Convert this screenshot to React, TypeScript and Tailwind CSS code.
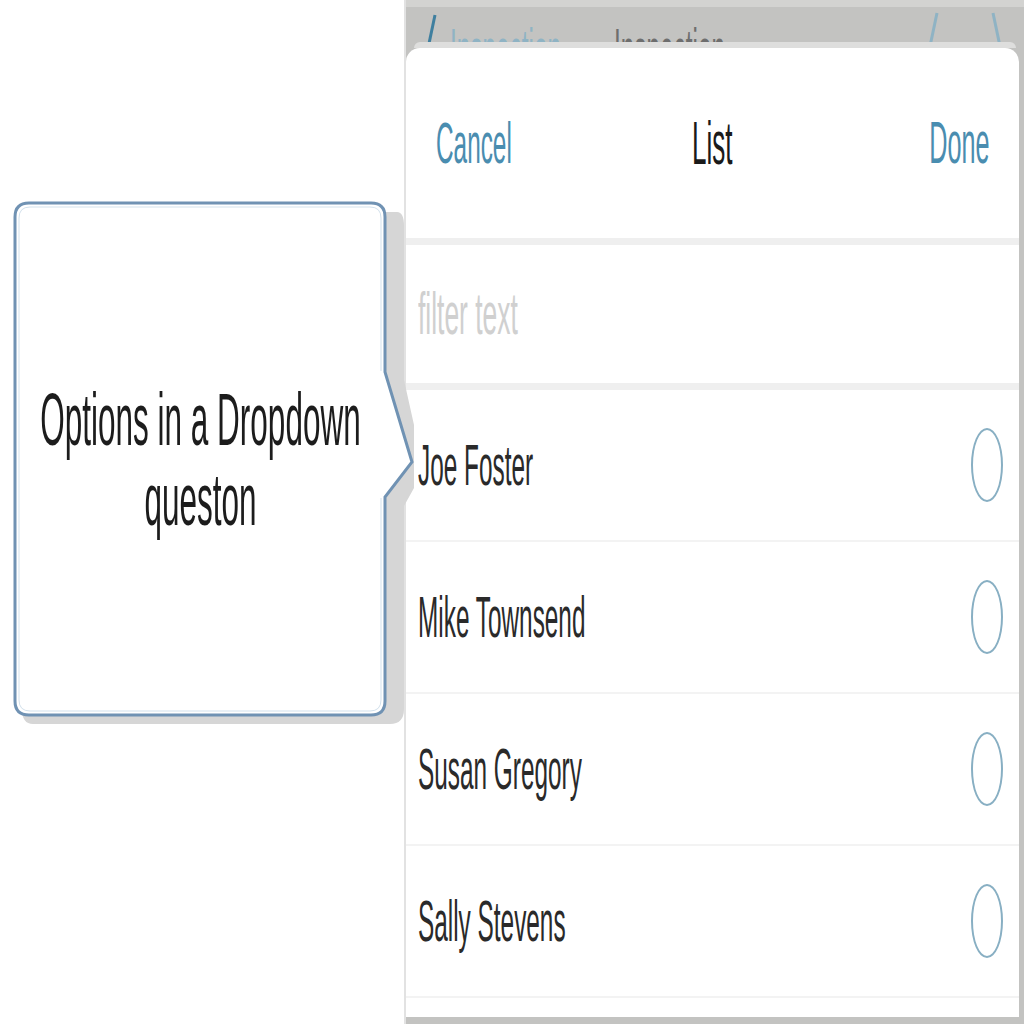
import React from "react";

const font = { fontFamily: '"Liberation Sans", Arial, sans-serif' };

function SqL({ children, className = "" }: { children: React.ReactNode; className?: string }) {
  return <span className={"inline-block whitespace-nowrap origin-left scale-x-[0.42] " + className}>{children}</span>;
}

const people = ["Joe Foster", "Mike Townsend", "Susan Gregory", "Sally Stevens"];

export default function App() {
  return (
    <div className="w-[1024px] h-[1024px] bg-white flex overflow-hidden" style={font}>
      {/* Left: callout */}
      <div className="w-[404px] shrink-0">
        <div className="mt-[200px] ml-[12px] relative w-[402px] h-[545px]">
          <svg className="absolute inset-0" width="402" height="545" viewBox="0 0 402 545">
            <path
              d="M 21 12 H 385 Q 392 12 392 26 V 180 L 412 270 L 392 306 V 509 Q 392 524 378 524 H 21 Q 10 524 10 509 V 26 Q 10 12 21 12 Z"
              fill="#d6d6d6"
            />
            <path
              d="M 17 3 H 359 Q 373 3 373 17 V 172 L 400 262 L 373 297 V 501 Q 373 515 359 515 H 17 Q 3 515 3 501 V 17 Q 3 3 17 3 Z"
              fill="#ffffff"
              stroke="#7092b3"
              strokeWidth="3"
            />
            <path
              d="M 18 7 H 358 Q 369 7 369 18 V 171 M 369 298 V 500 Q 369 511 358 511 H 18 Q 7 511 7 500 V 18 Q 7 7 18 7"
              fill="none"
              stroke="#d3e1ec"
              strokeWidth="1"
            />
          </svg>
          <div className="relative w-[376px] h-[518px] flex flex-col items-center justify-center text-[75px] leading-[80px] text-[#1c1c1c]">
            <span className="whitespace-nowrap scale-x-[0.42]">Options in a Dropdown</span>
            <span className="whitespace-nowrap scale-x-[0.42]">queston</span>
          </div>
        </div>
      </div>

      {/* Right: phone panel */}
      <div className="flex-1 flex flex-col border-l-2 border-[#e2e2e2] bg-[#ececec]">
        {/* Top nav bar (mostly hidden) */}
        <div className="h-[42px] bg-[#c3c3c1] border-t-[7px] border-[#d3d3d1] overflow-hidden flex items-start text-[58px] leading-none">
          <svg className="ml-[18px] mt-[6px] shrink-0" width="14" height="40" viewBox="0 0 14 40">
            <path d="M 11 2 L 3 40" stroke="#3f7f9f" strokeWidth="3" fill="none" />
          </svg>
          <div className="w-[150px] ml-[12px] pt-[13px] text-[#8fb3c4]">
            <SqL>Inspection</SqL>
          </div>
          <div className="w-[250px] ml-[14px] pt-[13px] text-[#6e6e6e]">
            <SqL>Inspection</SqL>
          </div>
          <svg className="ml-[62px] mt-[4px] shrink-0" width="14" height="40" viewBox="0 0 14 40">
            <path d="M 11 2 L 3 40" stroke="#8fb3c4" strokeWidth="3" fill="none" />
          </svg>
          <svg className="ml-[50px] mt-[4px] shrink-0" width="14" height="40" viewBox="0 0 14 40">
            <path d="M 3 2 L 11 40" stroke="#8fb3c4" strokeWidth="3" fill="none" />
          </svg>
        </div>
        <div className="h-[6px] bg-[#c3c3c1] px-[8px]">
          <div className="h-full bg-[#dededd] rounded-t-[6px]" />
        </div>

        {/* Sheet */}
        <div className="flex-1 bg-[#c3c3c1] flex flex-col">
          <div className="flex-1 bg-white rounded-t-[14px] mr-[5px] mb-[7px] flex flex-col">
            {/* Header */}
            <div className="h-[190px] flex items-center px-[30px] leading-none">
              <div className="flex-1 flex justify-start text-[58px] text-[#4a8db0]">
                <span className="inline-block whitespace-nowrap origin-left scale-x-[0.42]">Cancel</span>
              </div>
              <div className="flex-1 flex justify-center text-[62px] text-[#1a1a1a]">
                <span className="inline-block whitespace-nowrap origin-center scale-x-[0.42]">List</span>
              </div>
              <div className="flex-1 flex justify-end text-[60px] text-[#4a8db0]">
                <span className="inline-block whitespace-nowrap origin-right scale-x-[0.42]">Done</span>
              </div>
            </div>
            <div className="h-[7px] bg-[#efefef]" />
            {/* Filter */}
            <div className="h-[138px] flex items-center pl-[12px] text-[60px] leading-none text-[#d0d0d0]">
              <span className="inline-block whitespace-nowrap origin-left scale-x-[0.44]">filter text</span>
            </div>
            <div className="h-[7px] bg-[#efefef]" />
            {/* Rows */}
            {people.map((p) => (
              <div key={p} className="h-[152px] shrink-0 flex items-center pl-[12px] pr-[16px] border-b-2 border-[#f3f3f3]">
                <div className="flex-1 min-w-0 text-[58px] leading-none text-[#2a2a2a]">
                  <SqL>{p}</SqL>
                </div>
                <div className="w-[32px] h-[74px] rounded-[50%] border-2 border-[#88afc3]" />
              </div>
            ))}
          </div>
        </div>
      </div>
    </div>
  );
}
